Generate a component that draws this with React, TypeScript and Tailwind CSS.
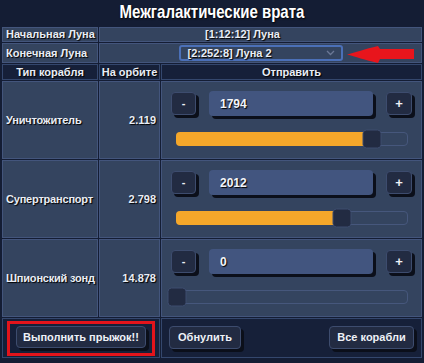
import React from "react";

const font = { fontFamily: '"Liberation Sans", Arial, sans-serif' };

function Btn({ children, className = "" }: { children: React.ReactNode; className?: string }) {
  return (
    <button
      className={`rounded-[4px] bg-[#222b42] border border-[#3d4c6e] shadow-[3px_3px_0_#0b0f1a] text-[#eef1f7] text-[11px] font-bold leading-none whitespace-nowrap ${className}`}
      style={font}
    >
      {children}
    </button>
  );
}

function Slider({ ratio }: { ratio: number }) {
  return (
    <div className="relative ml-[5px] mr-[4px] h-[14px] rounded-[4px] border border-[#46577c]">
      <div
        className="absolute -left-px -top-px -bottom-px rounded-[4px] bg-[#f5a72a]"
        style={{ width: `${ratio * 100}%` }}
      />
      <div
        className="absolute top-1/2 w-[19px] h-[19px] -translate-y-1/2 -translate-x-1/2 rounded-[4px] bg-[#222b42] border border-[#3d4c6e]"
        style={{ left: `${ratio * 100}%` }}
      />
    </div>
  );
}

function ShipRow({ name, count, value, ratio }: { name: string; count: string; value: string; ratio: number }) {
  const cell = "border border-[#43557c] bg-[#34445f] h-[78px] whitespace-nowrap";
  return (
    <tr>
      <td className={`${cell} pl-[3px] text-left tracking-[-0.2px]`}>{name}</td>
      <td className={`${cell} pr-[3px] text-right`}>{count}</td>
      <td className={`${cell} px-[9px] align-top pt-[9px]`}>
        <div className="flex items-center">
          <Btn className="w-[25px] h-[23px]">-</Btn>
          <input
            readOnly
            value={value}
            className="mx-[13px] flex-1 min-w-0 h-[25px] rounded-[4px] bg-[#42557f] shadow-[3px_3px_0_#0b0f1a] pl-[11px] text-[#f2f4f9] text-[12px] font-bold outline-none [text-shadow:1px_1px_1px_#000]"
            style={font}
          />
          <Btn className="w-[26px] h-[23px] text-[13px]">+</Btn>
        </div>
        <div className="mt-[16px]">
          <Slider ratio={ratio} />
        </div>
      </td>
    </tr>
  );
}

export default function App() {
  const cell = "border border-[#43557c] bg-[#34445f] whitespace-nowrap";
  const head = "border border-[#34476d] bg-[#162039] whitespace-nowrap";
  return (
    <div
      className="w-[424px] h-[363px] bg-[#141d34] text-[#e9edf5] text-[11px] font-bold overflow-hidden leading-[13px]"
      style={font}
    >
      <div className="h-[29px] flex items-center justify-center -mt-[3px]">
        <span className="inline-block text-[19px] text-white [text-shadow:1px_1px_2px_#000] scale-x-[0.79] whitespace-nowrap">
          Межгалактические врата
        </span>
      </div>
      <table className="mx-[1px] w-[422px] table-fixed border-separate border-spacing-[1px] [text-shadow:1px_1px_1px_#000]">
        <colgroup>
          <col className="w-[96px]" />
          <col className="w-[61px]" />
          <col />
        </colgroup>
        <tbody>
          <tr>
            <td className={`${cell} h-[15px] pl-[3px]`}>Начальная Луна</td>
            <td colSpan={2} className={`${cell} h-[15px] text-center pr-[36px]`}>
              [1:12:12] Луна
            </td>
          </tr>
          <tr>
            <td className={`${cell} h-[20px] pl-[3px]`}>Конечная Луна</td>
            <td colSpan={2} className={`${cell} h-[20px] relative`}>
              <div className="flex justify-center">
                <div className="w-[164px] h-[16px] rounded-[3px] border-2 border-[#4b70b8] flex items-center justify-between pl-[7px] pr-[4px]">
                  <span>[2:252:8] Луна 2</span>
                  <svg width="9" height="6" viewBox="0 0 9 6" className="mr-[2px]">
                    <path d="M1 1 L4.5 4.5 L8 1" stroke="#6b7896" strokeWidth="1.3" fill="none" />
                  </svg>
                </div>
              </div>
              <svg
                className="absolute left-[247px] top-[2px]"
                width="68"
                height="17"
                viewBox="0 0 68 17"
              >
                <path
                  d="M0 8.5 C8 6.5, 18 3, 31 0 L33 3 L67 3 L67 13 L33 13 L31 17 C18 14, 8 10.5, 0 8.5 Z"
                  fill="#e8151c"
                />
              </svg>
            </td>
          </tr>
          <tr>
            <td className={`${head} h-[16px] text-center`}>Тип корабля</td>
            <td className={`${head} h-[16px] text-center`}>На орбите</td>
            <td className={`${head} h-[16px] text-center`}>Отправить</td>
          </tr>
          <ShipRow name="Уничтожитель" count="2.119" value="1794" ratio={1794 / 2119} />
          <ShipRow name="Супертранспорт" count="2.798" value="2012" ratio={2012 / 2798} />
          <ShipRow name="Шпионский зонд" count="14.878" value="0" ratio={0} />
          <tr>
            <td colSpan={2} className={`${head} h-[40px] px-[4px]`}>
              <div className="border-[3px] border-[#e3141b] h-[35px] flex items-center pl-[6px] pr-[4px]">
                <Btn className="w-[130px] h-[22px] -mt-[2px]">Выполнить прыжок!!</Btn>
              </div>
            </td>
            <td className={`${head} h-[40px] px-[7px]`}>
              <div className="flex justify-between items-center -mt-[2px]">
                <Btn className="w-[72px] h-[23px]">Обнулить</Btn>
                <Btn className="w-[85px] h-[23px]">Все корабли</Btn>
              </div>
            </td>
          </tr>
        </tbody>
      </table>
    </div>
  );
}
